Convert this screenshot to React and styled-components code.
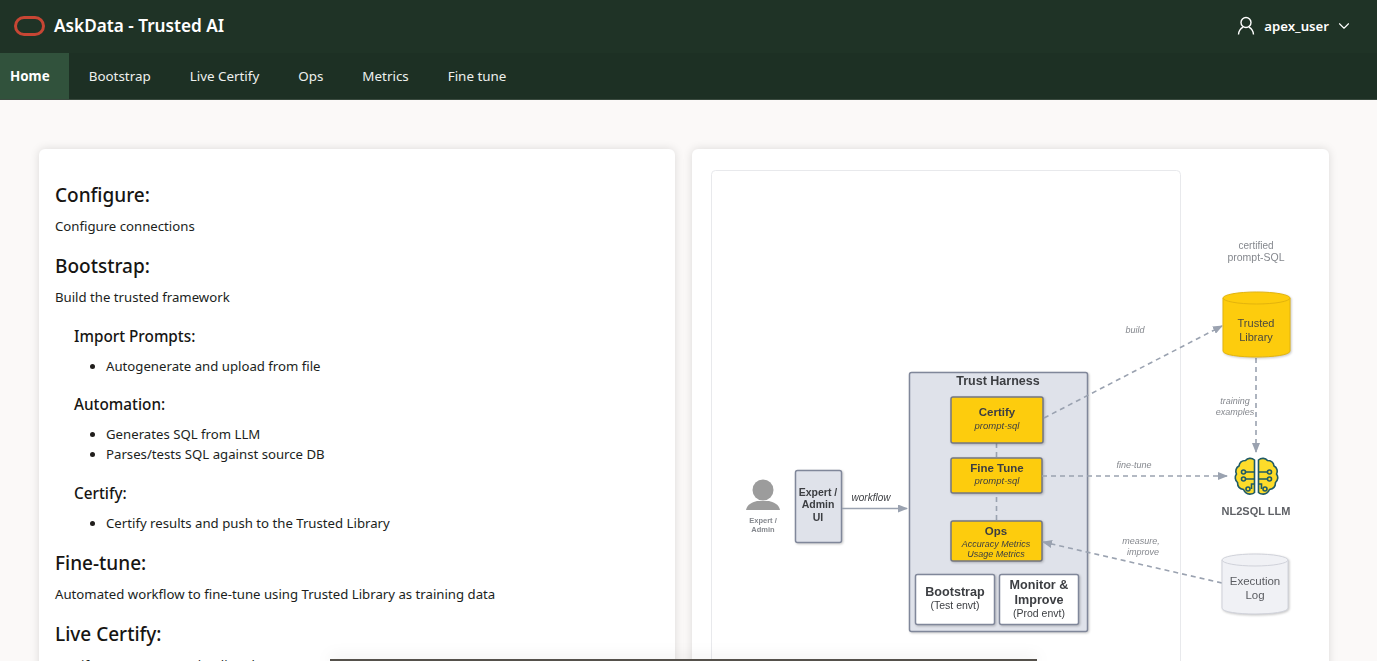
import React from 'react'
import styled, { createGlobalStyle } from 'styled-components'
import { ChevronDown } from 'lucide-react'

const GlobalStyle = createGlobalStyle`
  html, body {
    margin: 0;
    height: 100%;
    overflow: hidden;
    background: #fbf9f8;
    font-family: 'Noto Sans', sans-serif;
    color: #161513;
  }
`

const Page = styled.div`
  height: 100vh;
  overflow: hidden;
  position: relative;
`

const Header = styled.header`
  height: 53px;
  background: #1f3326;
  display: flex;
  align-items: center;
  justify-content: space-between;
  padding: 0 24px 2px 14px;
  box-sizing: border-box;
  color: #fff;
`

const Brand = styled.div`
  display: flex;
  align-items: center;
  gap: 9px;
  font-size: 17.2px;
  font-weight: 600;
`

const UserMenu = styled.div`
  display: flex;
  align-items: center;
  font-size: 13.2px;
  font-weight: 600;
  gap: 9px;
  svg {
    display: block;
  }
`

const Chevron = styled(ChevronDown)`
  margin-left: -3px;
`

const NavBar = styled.nav`
  height: 47px;
  background: #1d3024;
  border-bottom: 1px solid #3a4a3f;
  box-sizing: border-box;
  display: flex;
`

const NavItem = styled.div`
  display: flex;
  align-items: center;
  padding: ${(p) => (p.$active ? '0 19.5px 0 10px' : '0 19.5px')};
  font-size: 13.4px;
  font-weight: ${(p) => (p.$active ? 700 : 400)};
  color: ${(p) => (p.$active ? '#fff' : '#eef0ee')};
  background: ${(p) => (p.$active ? '#31523c' : 'transparent')};
`

const Content = styled.main`
  display: grid;
  grid-template-columns: 636px 637px;
  column-gap: 17px;
  padding: 49px 0 0 39px;
`

const Card = styled.section`
  background: #fff;
  border-radius: 6px;
  box-shadow: 0 0 10px rgba(0, 0, 0, 0.13);
  height: 640px;
  box-sizing: border-box;
`

const TextCard = styled(Card)`
  padding: 33px 16px 0;
`

const DiagramCard = styled(Card)`
  padding: 21px 0 0 19px;
`

const Heading = styled.h2`
  margin: 0 0 9px;
  font-size: 19px;
  line-height: 26px;
  font-weight: 500;
`

const Para = styled.p`
  margin: 0 0 18px;
  font-size: 13.2px;
  line-height: 18px;
  color: #201e1c;
`

const SubSection = styled.div`
  padding: 1px 0 0 19px;
`

const SubHeading = styled.h3`
  margin: 0 0 9px;
  font-size: 15.3px;
  line-height: 22px;
  font-weight: 500;
`

const BulletList = styled.ul`
  margin: 0 0 ${(p) => p.$after || 17}px;
  padding-left: 32px;
  font-size: 13.2px;
  line-height: 20px;
  color: #201e1c;
`

const DiagramSvg = styled.svg`
  display: block;
  filter: blur(0.5px);
  text {
    font-family: 'Liberation Sans', sans-serif;
    text-anchor: middle;
  }
`

const Shaded = styled.g`
  filter: drop-shadow(1px 1px 1px rgba(0, 0, 0, 0.22));
`

const BottomBar = styled.div`
  position: absolute;
  left: 330px;
  bottom: 0;
  width: 707px;
  height: 2px;
  background: #55514b;
  box-shadow: 0 0 16px rgba(0, 0, 0, 0.28);
`

const OracleLogo = () => (
  <svg width="31" height="20" viewBox="0 0 31 20">
    <rect x="1.5" y="1.5" width="28" height="17" rx="8.5" fill="none" stroke="#c74634" strokeWidth="3" />
  </svg>
)

const UserIcon = () => (
  <svg width="18" height="20" viewBox="0 0 18 20" fill="none" stroke="#fff" strokeWidth="1.4">
    <circle cx="9" cy="6.5" r="5" />
    <path d="M1.5 18.5c.3-4 2.6-6.4 4.6-7.4M16.5 18.5c-.3-4-2.6-6.4-4.6-7.4" />
  </svg>
)

const grey = '#9aa2b0'
const dark = '#3c3e42'
const note = '#85888e'
const yellow = '#fdcc0d'

const Box = ({ x, y, w, h, fill, stroke = '#80879a' }) => (
  <Shaded>
    <rect x={x} y={y} width={w} height={h} rx="2" fill={fill} stroke={stroke} strokeWidth="1.5" />
  </Shaded>
)

const Cylinder = ({ x, y, w, h, fill, stroke }) => (
  <Shaded>
    <path
      d={`M${x} ${y + 6}v${h - 12}c0 8 ${w} 8 ${w} 0v${-(h - 12)}`}
      fill={fill}
      stroke={stroke}
      strokeWidth="1"
    />
    <ellipse cx={x + w / 2} cy={y + 6} rx={w / 2} ry="6" fill={fill} stroke={stroke} strokeWidth="1" />
  </Shaded>
)

const Label = ({ x, y, size = 10, weight, italic, color = dark, children }) => (
  <text x={x} y={y} fontSize={size} fontWeight={weight} fontStyle={italic ? 'italic' : undefined} fill={color}>
    {children}
  </text>
)

const Dashed = (props) => (
  <line stroke={grey} strokeWidth="1.6" strokeDasharray="5 4" markerEnd="url(#head)" {...props} />
)

const BrainHalf = ({ transform }) => (
  <g transform={transform} fill="none" stroke="#1f5a66" strokeWidth="1.6">
    <path
      d="M1254.5 459c-3-2.5-7-2-9 .5-3.5 0-6 2-6.5 5.5-3 1.5-4 5-2.5 8-2 2.5-1.5 6.5 1 8.5 0 4 2.5 6.5 6 7 1.5 3.5 4.5 5 7.5 4.5 1.5 0 2.5-.5 3.5-1.500z"
      fill="#fddc2a"
    />
    <path d="M1254.5 471h-9M1254.5 478h-9M1254.5 483h-3v5" />
    <circle cx="1243.5" cy="471" r="2" fill="#fddc2a" />
    <circle cx="1243.5" cy="478" r="2" fill="#fddc2a" />
    <circle cx="1248" cy="488" r="2" fill="#fddc2a" />
  </g>
)

const Diagram = () => (
  <DiagramSvg width="599" height="500" viewBox="711 170 599 500">
    <defs>
      <marker id="head" markerWidth="10" markerHeight="8" refX="9" refY="4" orient="auto" markerUnits="userSpaceOnUse">
        <path d="M0 0L10 4L0 8z" fill={grey} />
      </marker>
    </defs>

    {/* image frame */}
    <rect x="711.5" y="170.5" width="469" height="520" rx="4" fill="#fff" stroke="#e8e9ec" />

    {/* person */}
    <circle cx="763" cy="490" r="10.5" fill="#9c9c9c" />
    <path d="M746 510c1-6 7-8 11-9h12c4 1 10 3 11 9z" fill="#9c9c9c" />
    <Label x={763} y={523} size={7.5} weight="700" color={note}>Expert /</Label>
    <Label x={763} y={532} size={7.5} weight="700" color={note}>Admin</Label>

    {/* admin UI */}
    <Box x={795.5} y={470.5} w={46} h={72} fill="#dfe2ea" />
    <Label x={818} y={496} size={10.5} weight="700">Expert /</Label>
    <Label x={818} y={508} size={10.5} weight="700">Admin</Label>
    <Label x={818} y={521} size={10.5} weight="700">UI</Label>
    <Label x={871} y={501} size={10} italic>workflow</Label>
    <line x1="842" y1="508.5" x2="907" y2="508.5" stroke={grey} strokeWidth="1.5" markerEnd="url(#head)" />

    {/* trust harness */}
    <Box x={909.5} y={372.5} w={178} h={259} fill="#dfe2ea" />
    <Label x={998} y={385} size={12.5} weight="700">Trust Harness</Label>
    <line x1="996.5" y1="443" x2="996.5" y2="521" stroke={grey} strokeWidth="1.6" strokeDasharray="5 4" />

    <Box x={951} y={397} w={92} h={46} fill={yellow} stroke="#737680" />
    <Label x={997} y={416} size={11.5} weight="700">Certify</Label>
    <Label x={997} y={429} size={9.5} italic>prompt-sql</Label>

    <Box x={951} y={458} w={91} h={35} fill={yellow} stroke="#737680" />
    <Label x={997} y={472} size={11.5} weight="700">Fine Tune</Label>
    <Label x={997} y={484} size={9.5} italic>prompt-sql</Label>

    <Box x={951} y={521} w={91} h={40} fill={yellow} stroke="#737680" />
    <Label x={996} y={535} size={11.5} weight="700">Ops</Label>
    <Label x={996} y={547} size={9} italic>Accuracy Metrics</Label>
    <Label x={996} y={557} size={9} italic>Usage Metrics</Label>

    <Box x={915.5} y={574.5} w={79} h={50} fill="#fff" />
    <Label x={955} y={596} size={12.6} weight="700">Bootstrap</Label>
    <Label x={955} y={609} size={10.5}>(Test envt)</Label>

    <Box x={999.5} y={574.5} w={79} h={50} fill="#fff" />
    <Label x={1039} y={589} size={12.6} weight="700">Monitor &amp;</Label>
    <Label x={1039} y={604} size={12.6} weight="700">Improve</Label>
    <Label x={1039} y={617} size={10.5}>(Prod envt)</Label>

    {/* connectors */}
    <Dashed x1="1044" y1="418" x2="1222" y2="326" />
    <Dashed x1="1042" y1="476" x2="1227" y2="476" />
    <Dashed x1="1222" y1="583" x2="1043" y2="542" />
    <Dashed x1="1256" y1="358" x2="1256" y2="452" />

    <Label x={1135} y={333} size={9} italic color={note}>build</Label>
    <Label x={1134} y={468} size={9} italic color={note}>fine-tune</Label>
    <Label x={1141} y={544} size={9} italic color={note}>measure,</Label>
    <Label x={1143} y={555} size={9} italic color={note}>improve</Label>
    <Label x={1235} y={404} size={9} italic color={note}>training</Label>
    <Label x={1235} y={415} size={9} italic color={note}>examples</Label>

    {/* trusted library */}
    <Label x={1256} y={249} size={10} color={note}>certified</Label>
    <Label x={1256} y={261} size={10.5} color={note}>prompt-SQL</Label>
    <Cylinder x={1223} y={292} w={67} h={65} fill={yellow} stroke="#e3b40c" />
    <Label x={1256} y={327} size={11} color="#4a4940">Trusted</Label>
    <Label x={1256} y={341} size={11} color="#4a4940">Library</Label>

    {/* llm brain */}
    <g transform="translate(0 1)">
      <BrainHalf />
      <BrainHalf transform="matrix(-1 0 0 1 2513 0)" />
    </g>
    <Label x={1256} y={515} size={11} weight="700" color="#5f6166">NL2SQL LLM</Label>

    {/* execution log */}
    <Cylinder x={1222} y={554} w={66} h={60} fill="#f0f1f5" stroke="#d0d2da" />
    <Label x={1255} y={585} size={11.5} color="#5a5c61">Execution</Label>
    <Label x={1255} y={599} size={11.5} color="#5a5c61">Log</Label>
  </DiagramSvg>
)

const App = () => (
  <Page>
    <GlobalStyle />
    <Header>
      <Brand>
        <OracleLogo />
        AskData - Trusted AI
      </Brand>
      <UserMenu>
        <UserIcon />
        apex_user
        <Chevron size={18} strokeWidth={1.5} />
      </UserMenu>
    </Header>
    <NavBar>
      <NavItem $active>Home</NavItem>
      <NavItem>Bootstrap</NavItem>
      <NavItem>Live Certify</NavItem>
      <NavItem>Ops</NavItem>
      <NavItem>Metrics</NavItem>
      <NavItem>Fine tune</NavItem>
    </NavBar>
    <Content>
      <TextCard>
        <Heading>Configure:</Heading>
        <Para>Configure connections</Para>
        <Heading>Bootstrap:</Heading>
        <Para>Build the trusted framework</Para>
        <SubSection>
          <SubHeading>Import Prompts:</SubHeading>
          <BulletList>
            <li>Autogenerate and upload from file</li>
          </BulletList>
          <SubHeading>Automation:</SubHeading>
          <BulletList $after={18}>
            <li>Generates SQL from LLM</li>
            <li>Parses/tests SQL against source DB</li>
          </BulletList>
          <SubHeading>Certify:</SubHeading>
          <BulletList>
            <li>Certify results and push to the Trusted Library</li>
          </BulletList>
        </SubSection>
        <Heading>Fine-tune:</Heading>
        <Para>Automated workflow to fine-tune using Trusted Library as training data</Para>
        <Heading>Live Certify:</Heading>
        <Para>Certify prompt SQLs using live chat</Para>
      </TextCard>
      <DiagramCard>
        <Diagram />
      </DiagramCard>
    </Content>
    <BottomBar />
  </Page>
)

export default App
